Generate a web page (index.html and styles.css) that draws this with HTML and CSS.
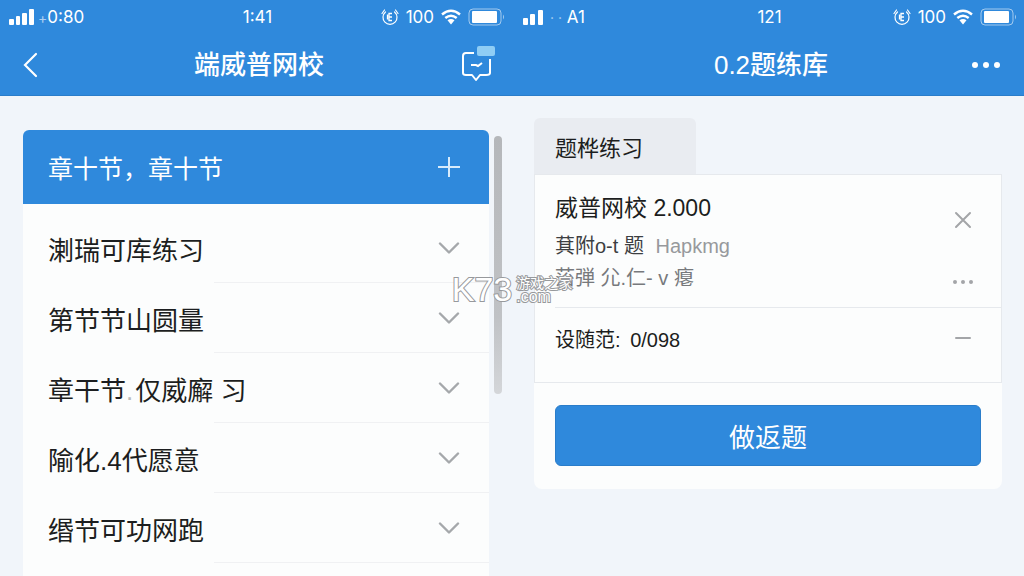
FILE: index.html
```html
<!DOCTYPE html>
<html lang="zh-CN">
<head>
	<meta charset="utf-8">
	<meta name="viewport" content="width=device-width, initial-scale=1">
	<title>端威普网校</title>
	<link rel="stylesheet" href="styles.css">
</head>
<body>
	<!-- shared icons -->
	<svg class="sprite" aria-hidden="true">
		<symbol id="alarm" viewBox="0 0 18 18">
			<path d="M4.500 4a7 7 0 1 0 9 0M1 5.500L3.500 2M17 5.500L14.500 2" fill="none" stroke="currentColor" stroke-width="1.200" stroke-linecap="round"/>
			<path d="M11 5.500H8v7h3M8 9h3M6.500 6.500v5" fill="none" stroke="currentColor" stroke-width="1.300"/>
		</symbol>
		<symbol id="wifi" viewBox="0 0 20 16">
			<path d="M1 5.500Q10-2 19 5.500M4.300 9Q10 4.300 15.700 9" fill="none" stroke="currentColor" stroke-width="2.400"/>
			<path d="M6.500 11.300Q10 8.500 13.500 11.300L10 15.500z" fill="currentColor"/>
		</symbol>
		<symbol id="battery" viewBox="0 0 38 18">
			<rect x="1" y="1" width="32" height="16" rx="4" fill="none" stroke="currentColor" stroke-opacity=".55"/>
			<rect x="4" y="3" width="25" height="12" rx="1" fill="currentColor"/>
			<path d="M35 6.500q2 2.500 0 5z" fill="currentColor" fill-opacity=".55"/>
		</symbol>
		<symbol id="chevron" viewBox="0 0 22 12">
			<path d="M2 1.500l9 9 9-9" fill="none" stroke="currentColor" stroke-width="2.400" stroke-linecap="round" stroke-linejoin="round"/>
		</symbol>
	</svg>

	<main class="screens">
		<section class="screen">
			<header class="topbar">
				<div class="status">
					<div class="status_left">
						<svg width="26" height="16" viewBox="0 0 26 16" fill="currentColor"><rect y="10" width="5" height="6" rx="1"/><rect x="7" y="7" width="4" height="9" rx="1"/><rect x="13" y="4" width="5" height="12" rx="1"/><rect x="20" width="5" height="16" rx="1"/></svg>
						<span><small>+</small>0:80</span>
					</div>
					<span class="time">1:41</span>
					<div class="status_right">
						<svg width="18" height="18"><use href="#alarm"/></svg>
						<span>100</span>
						<svg width="20" height="16"><use href="#wifi"/></svg>
						<svg width="38" height="18"><use href="#battery"/></svg>
					</div>
				</div>
				<div class="nav">
					<button type="button" class="icon back" aria-label="返回">
						<svg width="16" height="26" viewBox="0 0 16 26"><path d="M14 2L3 13l11 11" fill="none" stroke="currentColor" stroke-width="2.200" stroke-linecap="round"/></svg>
					</button>
					<h1>端威普网校</h1>
					<button type="button" class="icon message" aria-label="消息">
						<svg width="34" height="40" viewBox="0 0 34 40">
							<path d="M12 8H4q-3 0-3 3v17q0 2 3 2h6l4 5 4-5h6q4 0 4-2V14" fill="none" stroke="currentColor" stroke-width="2" stroke-linejoin="round"/>
							<path d="M9 20h5l2 1 4-3" fill="none" stroke="currentColor" stroke-width="2"/>
							<rect x="15" y="1" width="18" height="10" rx="2" fill="#8fcdf5"/>
						</svg>
					</button>
				</div>
			</header>
			<div class="content chapters">
				<div class="list">
					<button type="button" class="list_head">
						<span>章十节，章十节</span>
						<svg width="22" height="22" viewBox="0 0 22 22"><path d="M0 11h22M11 1v20" stroke="currentColor" stroke-width="2"/></svg>
					</button>
					<ul>
						<li><button type="button"><span>溂瑞可库练习</span><svg width="22" height="12"><use href="#chevron"/></svg></button></li>
						<li><button type="button"><span>第节节山圆量</span><svg width="22" height="12"><use href="#chevron"/></svg></button></li>
						<li><button type="button"><span>章干节<i>.</i>仅威廨 习</span><svg width="22" height="12"><use href="#chevron"/></svg></button></li>
						<li><button type="button"><span>隃化.4代愿意</span><svg width="22" height="12"><use href="#chevron"/></svg></button></li>
						<li><button type="button"><span>缗节可功网跑</span><svg width="22" height="12"><use href="#chevron"/></svg></button></li>
					</ul>
				</div>
				<div class="scrollbar"></div>
			</div>
		</section>

		<section class="screen">
			<header class="topbar">
				<div class="status">
					<div class="status_left">
						<svg width="26" height="16" viewBox="0 0 26 16" fill="currentColor"><rect x="2" y="9" width="5" height="7" rx="1"/><rect x="9" y="5" width="5" height="11" rx="1"/><rect x="17" y="1" width="5" height="15" rx="1"/></svg>
						<span class="carrier"><small>· ·</small> A1</span>
					</div>
					<span class="time">121</span>
					<div class="status_right">
						<svg width="18" height="18"><use href="#alarm"/></svg>
						<span>100</span>
						<svg width="20" height="16"><use href="#wifi"/></svg>
						<svg width="38" height="18"><use href="#battery"/></svg>
					</div>
				</div>
				<div class="nav">
					<h1>0.2题练库</h1>
					<button type="button" class="icon more" aria-label="更多">
						<svg width="30" height="8" viewBox="0 0 30 8" fill="currentColor"><circle cx="4" cy="4" r="3"/><circle cx="15" cy="4" r="3"/><circle cx="26" cy="4" r="3"/></svg>
					</button>
				</div>
			</header>
			<div class="content practice">
				<button type="button" class="tab">题桦练习</button>
				<div class="card">
					<div class="details">
						<div class="course">
							<div>
								<h2>威普网校 2.000</h2>
								<p>萁附o-t 题 <span class="muted">Hapkmg</span></p>
								<p class="faded">菭弾 尣.仁- v 瘪</p>
							</div>
							<div class="actions">
								<button type="button" class="icon" aria-label="关闭">
									<svg width="18" height="18" viewBox="0 0 18 18"><path d="M2 2l14 14M16 2L2 16" stroke="currentColor" stroke-width="2" stroke-linecap="round"/></svg>
								</button>
								<button type="button" class="icon" aria-label="更多选项">
									<svg width="20" height="4" viewBox="0 0 20 4" fill="currentColor"><circle cx="2" cy="2" r="2"/><circle cx="10" cy="2" r="2"/><circle cx="18" cy="2" r="2"/></svg>
								</button>
							</div>
						</div>
						<div class="range">
							<span>设随范: <b>0/098</b></span>
							<button type="button" class="icon" aria-label="减少">
								<svg width="16" height="4" viewBox="0 0 16 4"><path d="M1 2h14" stroke="currentColor" stroke-width="2" stroke-linecap="round"/></svg>
							</button>
						</div>
					</div>
					<button type="button" class="start">做返题</button>
				</div>
			</div>
		</section>

		<div class="watermark">
			<strong>K73</strong>
			<div>
				<span>游戏之家</span>
				<em>.com</em>
			</div>
		</div>
	</main>
</body>
</html>
```
FILE: styles.css
```css
* { box-sizing: border-box; }

body { margin: 0; background: #f1f5fa; color: #1c1e20; font-family: "Liberation Sans", "Noto Sans CJK SC", sans-serif; font-size: 26px; }

h1, h2, p, ul { margin: 0; padding: 0; font-weight: normal; }

ul { list-style: none; }

svg { display: block; flex: none; }

button { border: 0; padding: 0; background: none; color: inherit; font: inherit; cursor: pointer; }

.sprite { position: absolute; width: 0; height: 0; }

.screens { display: flex; position: relative; min-height: 100vh; }

.screen { display: flex; flex: 1; flex-direction: column; min-width: 0; }

/* top bar */
.topbar { background: #2f89dc; border-bottom: 1px solid #2a7dca; color: #fff; height: 96px; }

.status { display: grid; grid-template-columns: 1fr auto 1fr; align-items: center; height: 34px; padding: 0 6px 0 9px; font-family: Inter, sans-serif; font-size: 17px; }

.status_left, .status_right { display: flex; align-items: center; gap: 7px; }

.status_left { gap: 3px; }

.status_right { justify-content: flex-end; }

.status small { font-size: 14px; opacity: .6; }

.nav { display: grid; grid-template-columns: 1fr auto 1fr; align-items: center; height: 61px; padding: 0 16px 0 22px; }

.nav h1 { grid-column: 2; font-size: 26px; line-height: 36px; font-weight: 500; }

.back { justify-self: start; }

.message, .more { justify-self: end; }

.more { padding-right: 7px; }

/* chapter list */
.content { flex: 1; }

.chapters { display: flex; align-items: stretch; gap: 5px; padding: 34px 10px 0 23px; }

.list { flex: 1; background: #fcfdfd; border-radius: 6px 6px 0 0; }

.list_head, .list li button { display: flex; align-items: center; justify-content: space-between; width: 100%; padding: 0 29px 0 25px; text-align: left; }

.list_head { height: 74px; background: #2f89dc; border-radius: 6px 6px 0 0; color: #fff; font-size: 25px; }

.list_head svg { color: #d8ebfb; }

.list ul { padding-top: 9px; }

.list li { background: linear-gradient(#f0f1f3, #f0f1f3) right bottom / 59% 1px no-repeat; }

.list li button { height: 70px; white-space: pre; }

.list li svg { color: #a5a8ab; }

.list i { color: #bbb; font-style: normal; padding-right: 2px; }

.scrollbar { flex: none; width: 8px; height: 258px; margin-top: 6px; border-radius: 4px; background: linear-gradient(#b5b7ba, #c0c2c5 70%, #d4d6d9); }

/* practice card */
.practice { padding: 22px 22px 0; }

.tab { display: block; width: 162px; height: 56px; padding-left: 21px; background: #e9ecf1; border-radius: 6px 6px 0 0; font-size: 22px; text-align: left; }

.card { background: #fcfdfd; border-radius: 0 0 8px 8px; padding-bottom: 23px; }

.details { border: 1px solid #e6e9ed; }

.course { display: flex; justify-content: space-between; margin-left: 20px; padding: 15px 28px 13px 0; border-bottom: 1px solid #e6e9ed; }

.course h2 { margin-bottom: 4px; font-size: 23px; line-height: 36px; }

.course p { color: #3c3f42; font-size: 20px; line-height: 32px; white-space: pre; }

.course .faded { color: #77797c; }

.muted { color: #97999c; padding-left: 6px; }

.actions { display: flex; flex-direction: column; align-items: center; justify-content: space-between; padding: 21px 0 10px; color: #a3a5a8; }

.range { display: flex; align-items: center; justify-content: space-between; height: 74px; padding: 0 30px 14px 20px; font-size: 20px; }

.range b { font-weight: normal; padding-left: 4px; }

.range button { color: #a3a5a8; }

.start { display: block; width: calc(100% - 42px); height: 61px; margin: 22px 21px 0; background: #2f89dc; border: 1px solid #2a7dca; border-radius: 6px; color: #fff; }

/* site mark lying over both screens */
.watermark { position: absolute; top: 272px; left: 50%; display: flex; align-items: center; gap: 4px; transform: translateX(-50%); color: #fff; -webkit-text-stroke: 2px #97999c; paint-order: stroke fill; pointer-events: none; }

.watermark strong { font-size: 34px; font-weight: normal; line-height: 34px; }

.watermark div { display: flex; flex-direction: column; }

.watermark span { font-size: 14px; line-height: 16px; white-space: nowrap; }

.watermark em { font-size: 16px; font-style: normal; line-height: 12px; }
```
